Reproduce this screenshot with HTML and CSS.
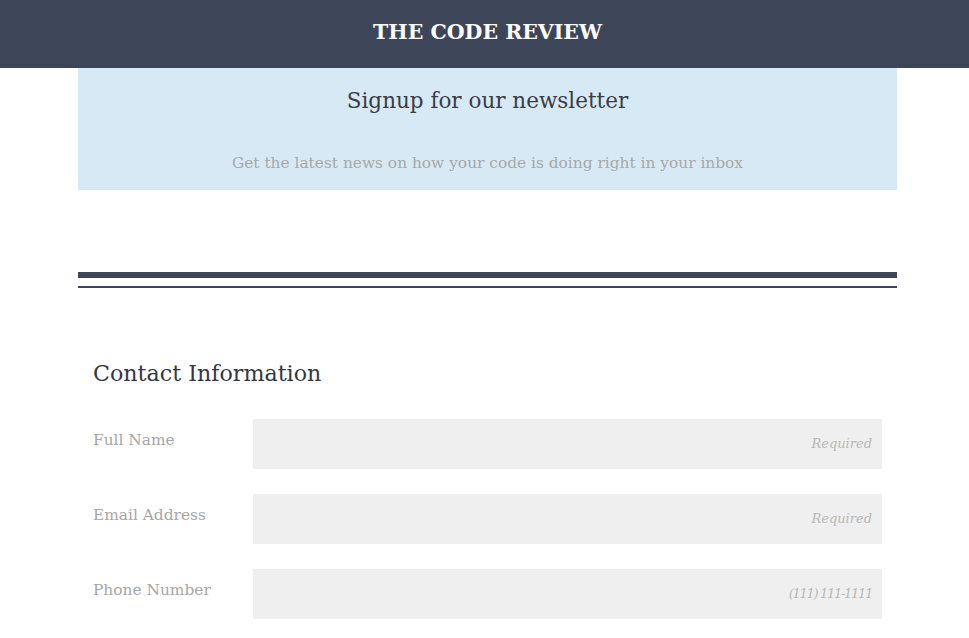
FILE: index.html
```html
<!DOCTYPE html>
<html>
<head>
<meta charset="utf-8">
<link rel="stylesheet" href="styles.css">
</head>
<body>
<header class="topbar"><h1 class="brand">THE CODE REVIEW</h1></header>
<main class="page">
  <section class="banner">
    <h2 class="banner-title">Signup for our newsletter</h2>
    <p class="banner-sub">Get the latest news on how your code is doing right in your inbox</p>
  </section>
  <div class="divider"><div class="rule-thick"></div><div class="rule-thin"></div></div>
  <section class="contact">
    <h3 class="contact-title">Contact Information</h3>
    <div class="row"><label class="label">Full Name</label><input class="field" placeholder="Required"></div>
    <div class="row"><label class="label">Email Address</label><input class="field" placeholder="Required"></div>
    <div class="row"><label class="label">Phone Number</label><input class="field field-phone" placeholder="(111) 111-1111"></div>
  </section>
</main>
</body>
</html>
```
FILE: styles.css
```css
html, body { margin: 0; padding: 0; background: #fff; }
body { font-family: "DejaVu Serif", serif; overflow: hidden; }
.topbar { height: 68px; box-sizing: border-box; padding-bottom: 4px; background: #3d4659; display: flex; align-items: center; justify-content: center; }
.brand { margin: 0 0 0 6px; color: #fff; font-size: 20.5px; font-weight: bold; letter-spacing: 0; }
.page { margin: 0 72px 0 78px; }
.banner { background: #d7e9f5; height: 122px; box-sizing: border-box; padding-top: 20px; text-align: center; }
.banner-title { margin: 0; font-weight: normal; font-size: 21.5px; color: #393d48; line-height: 26px; }
.banner-sub { margin: 39px 0 0; font-size: 15.4px; color: #a8a8a8; line-height: 20px; }
.divider { margin-top: 82px; }
.rule-thick { height: 6px; background: #3d4659; }
.rule-thin { height: 2px; background: #3d4659; margin-top: 8px; }
.contact { padding: 70px 15px 0; }
.contact-title { margin: 0 0 31px; font-weight: normal; font-size: 22.2px; color: #333846; line-height: 30px; }
.row { display: flex; align-items: flex-start; margin-bottom: 25px; }
.label { width: 160px; color: #a6a6a6; font-size: 15.4px; line-height: 20px; padding-top: 11px; }
.field { flex: 1; height: 50px; box-sizing: border-box; border: none; background: #efefef; padding: 0 10px 2px; text-align: right; font-family: "DejaVu Serif", serif; font-size: 13px; outline: none; }
.field::placeholder { color: #b8b8b8; font-style: italic; }
.field-phone::placeholder { letter-spacing: -1.3px; }
```
